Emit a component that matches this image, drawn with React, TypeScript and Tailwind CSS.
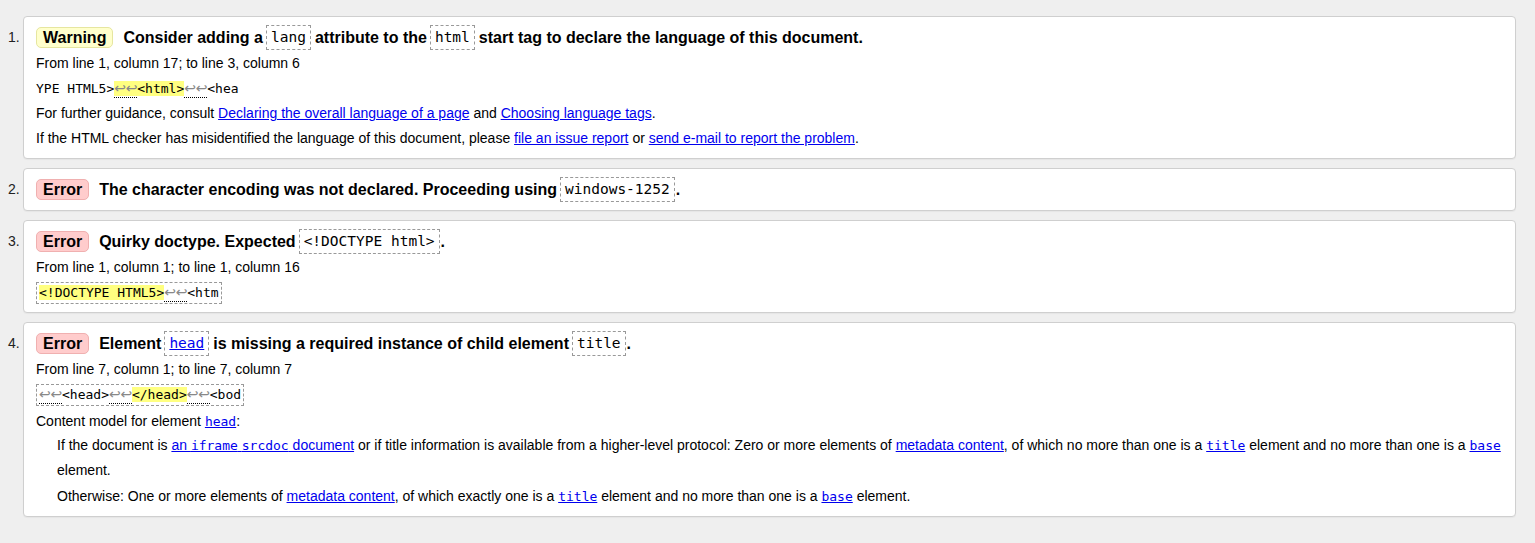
import React from 'react';

// W3C-checker style message list

const Code = ({ children, tight = false }: { children: React.ReactNode; tight?: boolean }) => (
  <code
    className={`ml-[3px] ${tight ? 'mr-[1px]' : 'mr-[4px]'} inline-block border border-dashed border-[#999] px-[4px] font-['DejaVu_Sans_Mono',monospace] text-[14.5px] font-normal leading-[23px] align-middle`}
  >
    {children}
  </code>
);

const A = ({ children, mono = false }: { children: React.ReactNode; mono?: boolean }) => (
  <a
    href="#"
    className={`text-[#0000ee] underline ${mono ? "font-['DejaVu_Sans_Mono',monospace] text-[13px]" : ''}`}
  >
    {children}
  </a>
);

const Lf = () => (
  <span className="inline-flex border-b border-dotted border-black font-['DejaVu_Sans',sans-serif] text-[14px] leading-[17px] text-[#888]">
    <span className="inline-block w-[11.5px] text-center">↩</span>
    <span className="inline-block w-[11.5px] text-center">↩</span>
  </span>
);

const Hl = ({ children }: { children: React.ReactNode }) => (
  <span className="bg-[#ffff80]">{children}</span>
);

const Extract = ({ children, boxed = false }: { children: React.ReactNode; boxed?: boolean }) => (
  <div className="flex h-[25px] items-center">
    <code
      className={`font-['DejaVu_Sans_Mono',monospace] text-[13px] leading-[20px] whitespace-pre ${
        boxed ? 'border border-dashed border-[#999] px-[2px]' : ''
      }`}
    >
      {children}
    </code>
  </div>
);

const Badge = ({ kind }: { kind: 'Warning' | 'Error' }) => (
  <span
    className={`mr-[10px] inline-block rounded-[5px] border px-[6px] text-[16px] font-bold leading-[19px] align-middle ${
      kind === 'Warning' ? 'border-[#e6e6a0] bg-[#ffffcc]' : 'border-[#f0b0b0] bg-[#ffcccc]'
    }`}
  >
    {kind}
  </span>
);

const Title = ({ children }: { children: React.ReactNode }) => (
  <div className="flex h-[23px] items-center whitespace-nowrap text-[16px] font-bold">{children}</div>
);

const Row = ({ children, className = '' }: { children: React.ReactNode; className?: string }) => (
  <div className={`leading-[25px] ${className}`}>{children}</div>
);

const Item = ({ n, children }: { n: number; children: React.ReactNode }) => (
  <li className="flex">
    <div className="w-[23px] shrink-0 pl-[8px] pt-[10px] text-[14px] leading-[23px] text-[#222]">{n}.</div>
    <div className="flex-1 rounded-[4px] border border-[#cfcfcf] bg-white pl-[12px] pr-[12px] pt-[9px] pb-[7px] shadow-[0_1px_1px_rgba(0,0,0,0.04)]">
      {children}
    </div>
  </li>
);

export default function App() {
  return (
    <div className="min-h-[543px] bg-[#efefef] pt-[16px] pr-[19px] font-['Liberation_Sans',Arial,sans-serif] text-[14px] text-black">
      <ol className="flex flex-col gap-[9px]">
        <Item n={1}>
          <Title>
            <Badge kind="Warning" />
            Consider adding a<Code>lang</Code>attribute to the<Code>html</Code>start tag to declare the language
            of this document.
          </Title>
          <Row className="mt-[2px]">From line 1, column 17; to line 3, column 6</Row>
          <Extract>
            YPE HTML5&gt;
            <Hl>
              <Lf />
              &lt;html&gt;
            </Hl>
            <Lf />
            &lt;hea
          </Extract>
          <Row>
            For further guidance, consult <A>Declaring the overall language of a page</A> and{' '}
            <A>Choosing language tags</A>.
          </Row>
          <Row>
            If the HTML checker has misidentified the language of this document, please <A>file an issue report</A>{' '}
            or <A>send e-mail to report the problem</A>.
          </Row>
        </Item>

        <Item n={2}>
          <div className="pb-[2px]">
            <Title>
              <Badge kind="Error" />
              The character encoding was not declared. Proceeding using<Code tight>windows-1252</Code>.
            </Title>
          </div>
        </Item>

        <Item n={3}>
          <Title>
            <Badge kind="Error" />
            Quirky doctype. Expected<Code tight>&lt;!DOCTYPE html&gt;</Code>.
          </Title>
          <Row className="mt-[2px]">From line 1, column 1; to line 1, column 16</Row>
          <Extract boxed>
            <Hl>&lt;!DOCTYPE HTML5&gt;</Hl>
            <Lf />
            &lt;htm
          </Extract>
        </Item>

        <Item n={4}>
          <Title>
            <Badge kind="Error" />
            Element
            <Code>
              <a href="#" className="text-[#0000ee] underline">
                head
              </a>
            </Code>
            is missing a required instance of child element<Code tight>title</Code>.
          </Title>
          <Row className="mt-[2px]">From line 7, column 1; to line 7, column 7</Row>
          <Extract boxed>
            <Lf />
            &lt;head&gt;
            <Lf />
            <Hl>&lt;/head&gt;</Hl>
            <Lf />
            &lt;bod
          </Extract>
          <div className="mt-[3px] leading-[23px]">
            Content model for element <A mono>head</A>:
          </div>
          <div className="ml-[21px]">
            <Row>
              If the document is{' '}
              <A>
                an <span className="font-['DejaVu_Sans_Mono',monospace] text-[13px]">iframe</span>{' '}
                <span className="font-['DejaVu_Sans_Mono',monospace] text-[13px]">srcdoc</span> document
              </A>{' '}
              or if title information is available from a higher-level protocol: Zero or more elements of{' '}
              <A>metadata content</A>, of which no more than one is a <A mono>title</A> element and no more than one
              is a <A mono>base</A> element.
            </Row>
            <Row className="mt-[1px]">
              Otherwise: One or more elements of <A>metadata content</A>, of which exactly one is a{' '}
              <A mono>title</A> element and no more than one is a <A mono>base</A> element.
            </Row>
          </div>
        </Item>
      </ol>
    </div>
  );
}
